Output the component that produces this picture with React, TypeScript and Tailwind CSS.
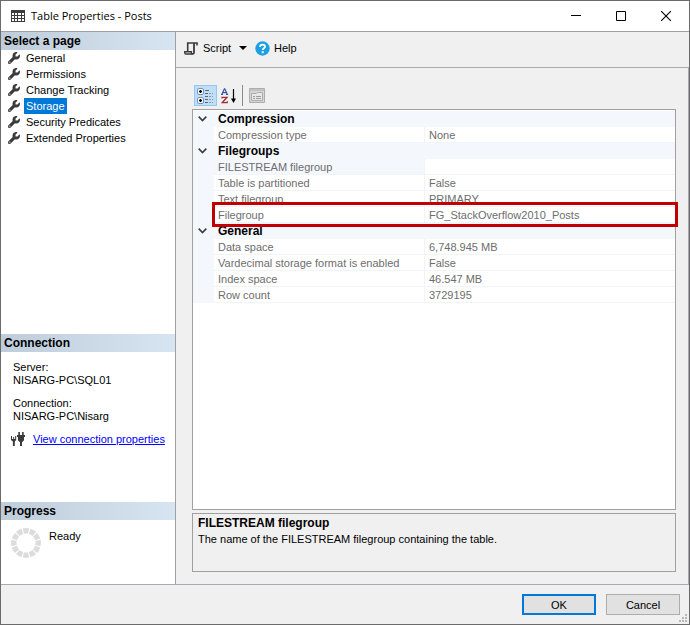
import React from 'react';
import { FaWrench } from 'react-icons/fa6';

type Property = {
  name: string;
  value: string;
  selected?: boolean;
  highlighted?: boolean;
};

const pages = ['General', 'Permissions', 'Change Tracking', 'Storage', 'Security Predicates', 'Extended Properties'];

const categories: { title: string; properties: Property[] }[] = [
  {
    title: 'Compression',
    properties: [{ name: 'Compression type', value: 'None' }]
  },
  {
    title: 'Filegroups',
    properties: [
      { name: 'FILESTREAM filegroup', value: '', selected: true },
      { name: 'Table is partitioned', value: 'False' },
      { name: 'Text filegroup', value: 'PRIMARY' },
      { name: 'Filegroup', value: 'FG_StackOverflow2010_Posts', highlighted: true }
    ]
  },
  {
    title: 'General',
    properties: [
      { name: 'Data space', value: '6,748.945 MB' },
      { name: 'Vardecimal storage format is enabled', value: 'False' },
      { name: 'Index space', value: '46.547 MB' },
      { name: 'Row count', value: '3729195' }
    ]
  }
];

const TableIcon = () => (
  <svg width="14" height="12" viewBox="0 0 14 12" shapeRendering="crispEdges">
    <path fill="#3b3b3b" d="M0 0h14v12H0z" />
    <path
      fill="#fff"
      d="M1 3h2v2H1zM4 3h2v2H4zM7 3h3v2H7zM11 3h2v2h-2zM1 6h2v2H1zM4 6h2v2H4zM7 6h3v2H7zM11 6h2v2h-2zM1 9h2v2H1zM4 9h2v2H4zM7 9h3v2H7zM11 9h2v2h-2z"
    />
  </svg>
);

const ScriptIcon = () => (
  <svg width="14" height="13" viewBox="0 0 14 13" fill="none" stroke="#3b3b3b">
    <path d="M3.7 9V1H13v2.6" strokeWidth="1.6" />
    <path d="M10 1v9.4c0 .9-.5 1.4-1.4 1.4" strokeWidth="1.8" />
    <path d="M0 9.8h7.4v1.8H9" strokeWidth="1.4" />
    <path d="M.8 10v1c0 .8.4 1 1 1h7" strokeWidth="1.4" />
  </svg>
);

const HelpIcon = () => (
  <svg width="15" height="15" viewBox="0 0 15 15">
    <circle cx="7.5" cy="7.5" r="7.2" fill="#1ba1e2" />
    <path d="M5 5.9c0-1.5 1-2.3 2.5-2.3s2.5.8 2.5 2c0 1.7-2.3 1.6-2.3 3.4" fill="none" stroke="#fff" strokeWidth="1.9" />
    <path d="M6.7 10.2h2v2h-2z" fill="#fff" />
  </svg>
);

const CategorizedIcon = () => (
  <svg width="17" height="16" viewBox="0 0 17 16">
    <g fill="#fff" stroke="#6f94c4">
      <rect x=".5" y=".5" width="6" height="6" rx="1.5" />
      <rect x=".5" y="9.5" width="6" height="6" rx="1.5" />
    </g>
    <path d="M2 3.5h3M3.5 2v3M2 12.5h3M3.5 11v3" stroke="#000" strokeWidth="1.3" />
    <path d="M8 2.5h4M8 5.5h3M8 8.5h3M8 11.5h3M8 14.5h3" stroke="#5c6478" />
    <path d="M12 5.5h4M12 8.5h4M12 11.5h4M12 14.5h4" stroke="#8c96b0" strokeDasharray="2 1" />
  </svg>
);

const SortIcon = () => (
  <svg width="16" height="16" viewBox="0 0 16 16" fill="none">
    <path d="M.8 6.5 3.4.8h.4l2.6 5.7M1.6 4.7h4M0 6.5h2M5 6.5h2.2" stroke="#3156a8" strokeWidth="1.2" />
    <path d="M1 10.5V9.3h5L1.2 14.7h5v-1.5" stroke="#9c2f36" strokeWidth="1.3" />
    <path d="M12.5 1v12" stroke="#000" strokeWidth="1.2" />
    <path d="M10 10.5h5L12.5 15z" fill="#000" />
  </svg>
);

const PropertyPagesIcon = () => (
  <svg width="16" height="15" viewBox="0 0 16 15" fill="none" stroke="#adadad">
    <path d="M.5.5h15v14H.5z" fill="#d6d6d6" />
    <path d="M1 2h14" stroke="#c2c2c2" strokeWidth="2" />
    <path d="M2.5 5.5h5l1-1h5v8h-11z" fill="#e8e8e8" />
    <path d="M4 8.5h2M7 8.5h5M4 10.5h2M7 10.5h5" stroke="#9c9c9c" />
  </svg>
);

const PlugIcon = () => (
  <svg width="15" height="14" viewBox="0 0 15 14" fill="#3b3b3b">
    <path d="M0 4h1v3h1.2V5h1v2h1V4h1v4L3.8 9.5V14H1.9V9.5L0 8z" />
    <path d="M7.3 0h1.6v3h2.2V0h1.6v3H14v2h-1v3.2L11.4 10H11v4H9v-4h-.4L7 8.2V5H6V3h1.3z" />
  </svg>
);

const Spinner = () => (
  <svg width="30" height="30" viewBox="0 0 30 30">
    <circle cx="15" cy="15" r="12.2" fill="none" stroke="#dcdcdc" strokeWidth="5.4" pathLength="120" strokeDasharray="8.4 1.6" strokeDashoffset="4.2" />
  </svg>
);

const ResizeGrip = () => (
  <svg width="8" height="8" viewBox="0 0 8 8" fill="#b8b8b8">
    <path d="M6 0h2v2H6zM3 3h2v2H3zM6 3h2v2H6zM0 6h2v2H0zM3 6h2v2H3zM6 6h2v2H6z" />
  </svg>
);

const TitleBar: React.FC = () => (
  <header className="flex h-[31px] shrink-0 items-center border-b border-[#a0a0a0] bg-white pl-2.5">
    <TableIcon />
    <h1 className="ml-1.5 flex-1 font-['Open_Sans','Noto_Sans',sans-serif] text-[11px]">Table Properties - Posts</h1>
    <div className="flex h-full">
      <button aria-label="Minimize" className="flex w-[45px] items-center justify-center">
        <svg width="10" height="10" viewBox="0 0 10 10" stroke="#000">
          <path d="M0 4.5h10" />
        </svg>
      </button>
      <button aria-label="Maximize" className="flex w-[45px] items-center justify-center">
        <svg width="10" height="10" viewBox="0 0 10 10" fill="none" stroke="#000">
          <path d="M.5.5h9v9h-9z" />
        </svg>
      </button>
      <button aria-label="Close" className="flex w-[46px] items-center justify-center">
        <svg width="10" height="10" viewBox="0 0 10 10" stroke="#000" strokeWidth="1.1">
          <path d="M0 0l10 10M10 0L0 10" />
        </svg>
      </button>
    </div>
  </header>
);

const PanelHeading: React.FC<{ children: React.ReactNode }> = ({ children }) => (
  <h2 className="h-[18px] bg-gradient-to-r from-[#bfcddb] to-[#d7e4f2] pl-[3px] text-[12px] leading-[18px] font-bold">{children}</h2>
);

const Sidebar: React.FC = () => (
  <aside className="flex w-[175px] shrink-0 flex-col border-r border-[#a0a0a0] bg-white">
    <nav className="flex-1">
      <PanelHeading>Select a page</PanelHeading>
      <ul>
        {pages.map((page) => (
          <li key={page}>
            <button className="flex h-4 items-center gap-1 pl-[7px]">
              <FaWrench size={12} className="text-[#3b3b3b]" />
              <span className={page === 'Storage' ? 'bg-[#0078d7] px-0.5 text-white' : 'px-0.5'}>{page}</span>
            </button>
          </li>
        ))}
      </ul>
    </nav>

    <section className="h-[168px]">
      <PanelHeading>Connection</PanelHeading>
      <div className="pt-[9px] pl-3 leading-[13px]">
        <p>Server:</p>
        <p>NISARG-PC\SQL01</p>
        <p className="mt-2.5">Connection:</p>
        <p>NISARG-PC\Nisarg</p>
      </div>
      <div className="mt-2 flex items-center gap-[7px] pl-2.5">
        <PlugIcon />
        <a href="#connection" className="whitespace-nowrap text-[#0000ff] underline">View connection properties</a>
      </div>
    </section>

    <section className="h-[82px]">
      <PanelHeading>Progress</PanelHeading>
      <div className="flex gap-2 pt-2 pl-2.5">
        <Spinner />
        <span>Ready</span>
      </div>
    </section>
  </aside>
);

const PropertyGrid: React.FC = () => (
  <div className="flex-1 border border-[#a0a0a0] bg-white pt-px text-[#6d6d6d]">
    <table className="w-full table-fixed border-collapse">
      <colgroup>
        <col className="w-[21px]" />
        <col className="w-[211px]" />
        <col />
      </colgroup>
      {categories.map((category) => (
        <tbody key={category.title}>
          <tr className="h-4 bg-[#f4f7fc] text-black">
            <td className="p-0">
              <button aria-label={`Collapse ${category.title}`} className="flex h-4 w-full items-center pl-[5px]">
                <svg width="9" height="6" viewBox="0 0 9 6" fill="none" stroke="#404040" strokeWidth="1.7">
                  <path d="M.7.7l3.8 3.8L8.3.7" />
                </svg>
              </button>
            </td>
            <th colSpan={2} className="p-0 pl-1 text-left text-[12px] font-bold">{category.title}</th>
          </tr>
          {category.properties.map((property) => (
            <tr key={property.name} className="relative h-4">
              <td className="bg-[#f4f7fc] p-0">
                {property.highlighted && (
                  <div className="pointer-events-none absolute -top-[5px] -right-[3px] -bottom-1 left-[19px] border-3 border-[#c00000]" />
                )}
              </td>
              <td className={property.selected ? 'bg-[#f4f7fc] p-0' : 'p-0'}>
                <div className="h-4 border-r border-b border-[#f0f3fa] pl-1">{property.name}</div>
              </td>
              <td className="p-0">
                <div className="h-4 border-b border-[#f0f3fa] pl-1">{property.value}</div>
              </td>
            </tr>
          ))}
        </tbody>
      ))}
    </table>
  </div>
);

const App: React.FC = () => {
  return (
    <div className="flex min-h-screen flex-col border border-[#6b6b6b] bg-[#f0f0f0] font-['Liberation_Sans',Arial,sans-serif] text-[11px] leading-4 text-black">
      <TitleBar />
      <div className="flex flex-1 border-b border-[#a9a9b0]">
        <Sidebar />
        <main className="flex min-w-0 flex-1 flex-col">
          <div className="flex h-9 shrink-0 items-center border-b border-[#a9a9b0] pb-[3px] pl-2">
            <button className="flex w-[55px] items-center gap-[5px]">
              <ScriptIcon />
              Script
            </button>
            <button aria-label="Script options" className="flex h-4 items-center">
              <svg width="8" height="4" viewBox="0 0 8 4">
                <path d="M0 0h8L4 4z" />
              </svg>
            </button>
            <button className="ml-2 flex items-center gap-1">
              <HelpIcon />
              Help
            </button>
          </div>

          <div className="flex flex-1 flex-col border-r border-[#a9a9b0] pt-[17px] pr-3 pb-3 pl-4">
            <div className="flex h-6 items-start pl-0.5">
              <button aria-label="Categorized" className="flex h-[21px] w-[23px] items-center justify-center border border-[#90c8f6] bg-[#c2def5]">
                <CategorizedIcon />
              </button>
              <button aria-label="Alphabetical" className="flex h-[21px] w-[23px] items-center justify-center">
                <SortIcon />
              </button>
              <div className="mx-0.5 h-[21px] w-px bg-[#8c8c8c]" />
              <button aria-label="Property Pages" className="flex h-[21px] w-[23px] items-center justify-center">
                <PropertyPagesIcon />
              </button>
            </div>
            <PropertyGrid />
            <div className="mt-[3px] h-[59px] border border-[#a0a0a0] px-[5px] pt-px">
              <p className="text-[12px] font-bold">FILESTREAM filegroup</p>
              <p>The name of the FILESTREAM filegroup containing the table.</p>
            </div>
          </div>
        </main>
      </div>
      <footer className="relative flex h-[39px] shrink-0 justify-end gap-2.5 pt-[9px] pr-[9px]">
        <button className="h-[21px] w-[74px] border-2 border-[#0078d7] bg-[#e1e1e1] leading-4">OK</button>
        <button className="h-[21px] w-[74px] border border-[#adadad] bg-[#e1e1e1] leading-4">Cancel</button>
        <div className="absolute right-0.5 bottom-0.5">
          <ResizeGrip />
        </div>
      </footer>
    </div>
  );
};

export default App;
